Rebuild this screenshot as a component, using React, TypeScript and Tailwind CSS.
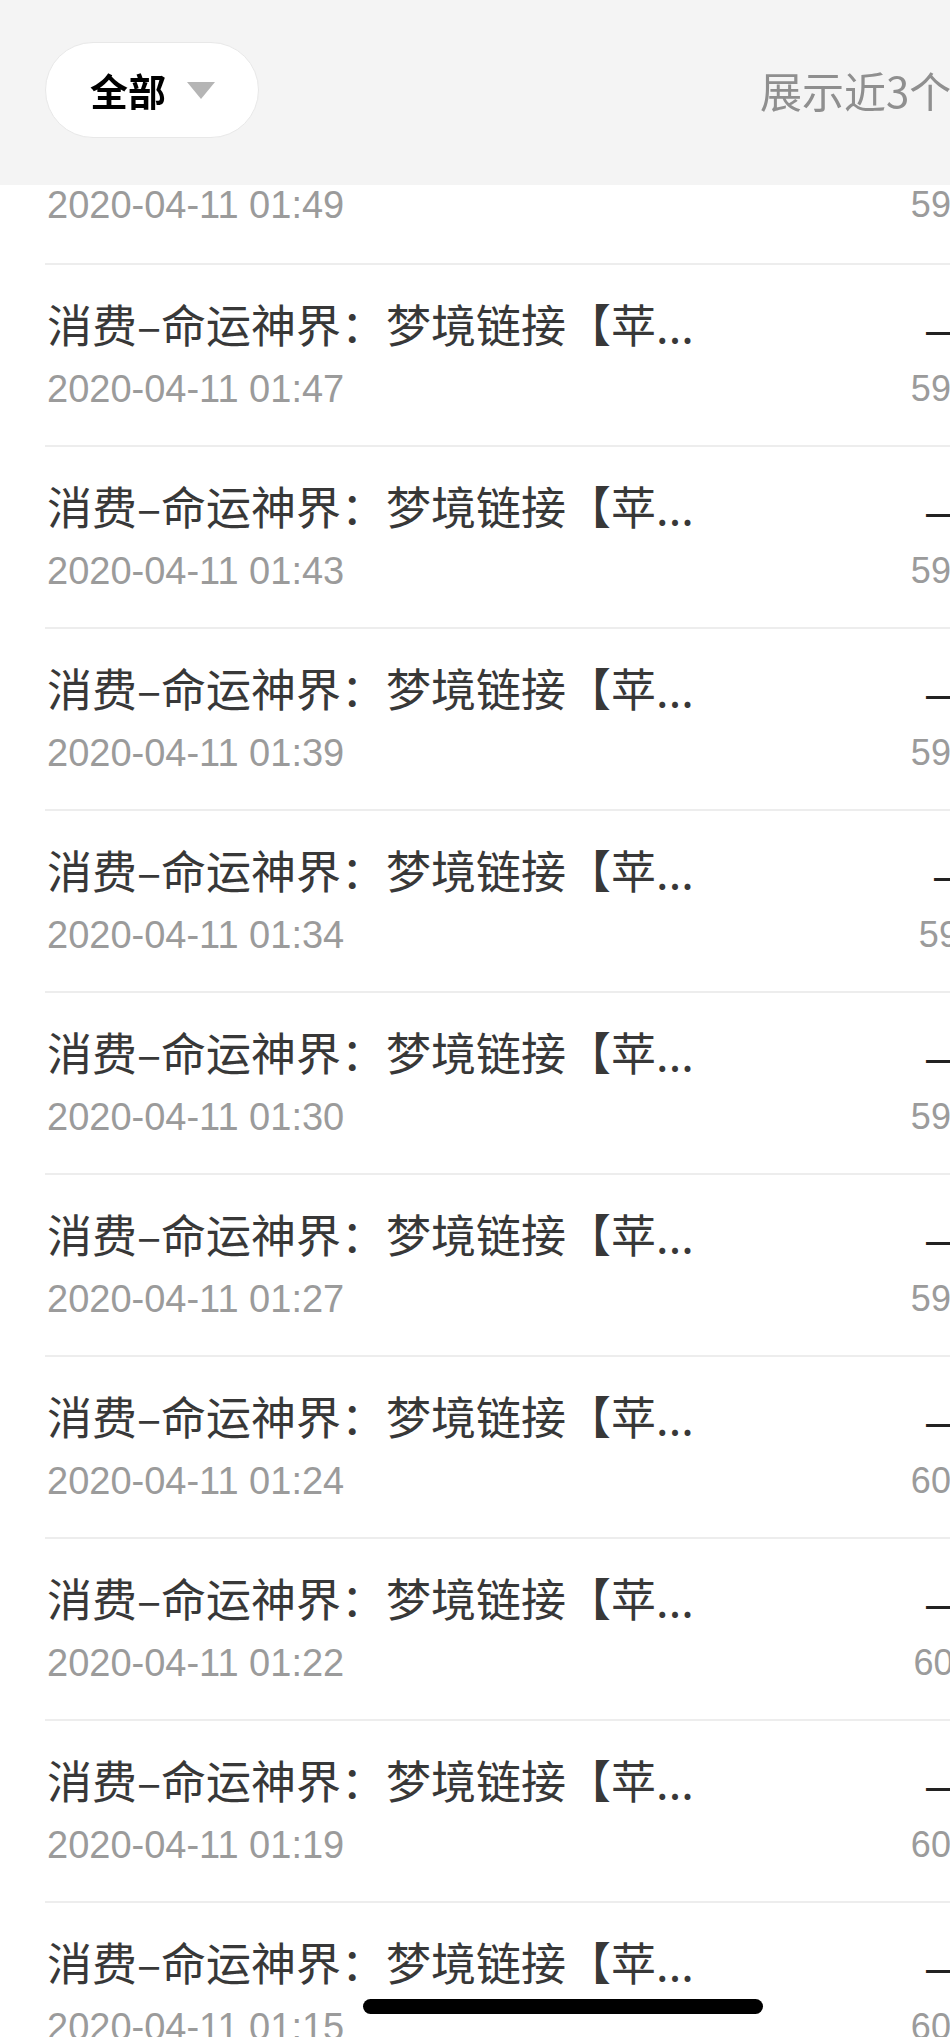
import React from 'react';

const rows = [
  { time: '2020-04-11 01:49', amount: '–6.00', balance: '5999.00' },
  { time: '2020-04-11 01:47', amount: '–6.00', balance: '5993.00' },
  { time: '2020-04-11 01:43', amount: '–6.00', balance: '5987.00' },
  { time: '2020-04-11 01:39', amount: '–6.00', balance: '5981.00' },
  { time: '2020-04-11 01:34', amount: '–6.00', balance: '5975.00', nudge: true },
  { time: '2020-04-11 01:30', amount: '–6.00', balance: '5969.00' },
  { time: '2020-04-11 01:27', amount: '–6.00', balance: '5963.00' },
  { time: '2020-04-11 01:24', amount: '–6.00', balance: '6005.00' },
  { time: '2020-04-11 01:22', amount: '–6.00', balance: '6011.00' },
  { time: '2020-04-11 01:19', amount: '–6.00', balance: '6017.00' },
  { time: '2020-04-11 01:15', amount: '–6.00', balance: '6023.00' },
];

const title = '消费–命运神界：梦境链接【苹...';

export default function App() {
  return (
    <div className="relative w-[950px] h-[2037px] overflow-hidden bg-white font-['Liberation_Sans','Noto_Sans_CJK_SC',sans-serif]">
      {/* filter bar sits over the scrolled list */}
      <div className="sticky top-0 z-10 h-[185px] bg-[#f4f4f4] flex items-start pt-[42px] whitespace-nowrap">
        <button className="ml-[45px] w-[214px] h-[96px] shrink-0 rounded-full bg-white border border-[#e8e8e8] flex items-center pl-[44px] gap-[21px]">
          <span className="text-[38px] leading-none font-bold text-black font-['Noto_Sans_CJK_SC',sans-serif]">全部</span>
          <span className="w-0 h-0 border-l-[14px] border-r-[14px] border-t-[17px] border-l-transparent border-r-transparent border-t-[#b5b5b5]" />
        </button>
        <span className="ml-[501px] mt-[24px] text-[42px] leading-[48px] text-[#8f8f8f] font-['Noto_Sans_CJK_SC',sans-serif]">
          展示近3个月的账单记录
        </span>
      </div>

      <div className="-mt-[104px] w-[1041px]">
        {rows.map((r, i) => (
          <div
            key={r.time}
            className={
              'ml-[45px] h-[182px] flex justify-between pt-[34px] ' +
              (i > 0 ? 'border-t-[2px] border-[#ededed]' : '')
            }
          >
            <div className="pl-[2px]">
              <div className="text-[45px] leading-[50px] text-[#383838] whitespace-nowrap font-['Noto_Sans_CJK_SC',sans-serif]">
                {title}
              </div>
              <div className="mt-[10px] text-[38px] leading-[60px] text-[#9b9b9b] whitespace-nowrap">{r.time}</div>
            </div>
            <div className={'flex flex-col items-end ' + (r.nudge ? 'mr-[-8px]' : '')}>
              <div className="text-[46px] leading-[60px] text-[#222]">{r.amount}</div>
              <div className="text-[36px] leading-[60px] text-[#9b9b9b]">{r.balance}</div>
            </div>
          </div>
        ))}
      </div>

      <div className="absolute left-[363px] bottom-[23px] w-[400px] h-[15px] rounded-full bg-black" />
    </div>
  );
}
